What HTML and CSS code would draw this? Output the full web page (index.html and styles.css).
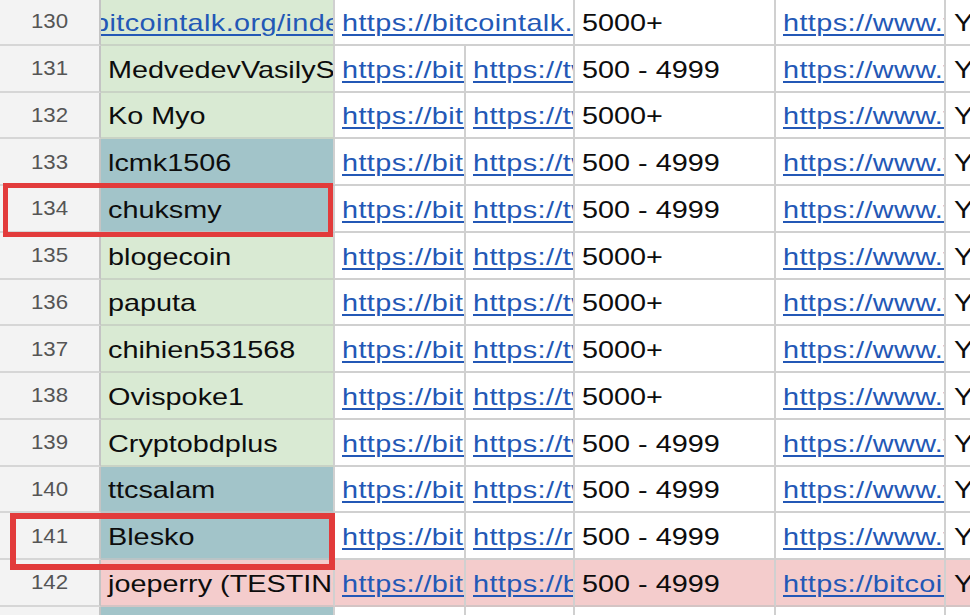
FILE: index.html
```html
<!DOCTYPE html>
<html>
<head>
<meta charset="utf-8">
<link rel="stylesheet" href="styles.css">
</head>
<body>
<div class="sheet">
  <div class="grid">
    <div class="rh"><span class="n">130</span></div>
    <div class="c green"><a class="t shift">bitcointalk.org/index.php?topic=</a></div>
    <div class="c wide"><a class="t">https://bitcointalk.org/index.php</a></div>
    <div class="c"><span class="t">5000+</span></div>
    <div class="c"><a class="t">https://www.twitter.com</a></div>
    <div class="c last"><span class="t">Y</span></div>

    <div class="rh"><span class="n">131</span></div>
    <div class="c green"><span class="t">MedvedevVasilySergeevich</span></div>
    <div class="c"><a class="t">https://bitcointalk.org</a></div>
    <div class="c"><a class="t">https://twitter.com</a></div>
    <div class="c"><span class="t">500 - 4999</span></div>
    <div class="c"><a class="t">https://www.twitter.com</a></div>
    <div class="c last"><span class="t">Y</span></div>

    <div class="rh"><span class="n">132</span></div>
    <div class="c green"><span class="t">Ko Myo</span></div>
    <div class="c"><a class="t">https://bitcointalk.org</a></div>
    <div class="c"><a class="t">https://twitter.com</a></div>
    <div class="c"><span class="t">5000+</span></div>
    <div class="c"><a class="t">https://www.twitter.com</a></div>
    <div class="c last"><span class="t">Y</span></div>

    <div class="rh"><span class="n">133</span></div>
    <div class="c blue"><span class="t">lcmk1506</span></div>
    <div class="c"><a class="t">https://bitcointalk.org</a></div>
    <div class="c"><a class="t">https://twitter.com</a></div>
    <div class="c"><span class="t">500 - 4999</span></div>
    <div class="c"><a class="t">https://www.twitter.com</a></div>
    <div class="c last"><span class="t">Y</span></div>

    <div class="rh"><span class="n">134</span></div>
    <div class="c blue"><span class="t">chuksmy</span></div>
    <div class="c"><a class="t">https://bitcointalk.org</a></div>
    <div class="c"><a class="t">https://twitter.com</a></div>
    <div class="c"><span class="t">500 - 4999</span></div>
    <div class="c"><a class="t">https://www.twitter.com</a></div>
    <div class="c last"><span class="t">Y</span></div>

    <div class="rh"><span class="n">135</span></div>
    <div class="c green"><span class="t">blogecoin</span></div>
    <div class="c"><a class="t">https://bitcointalk.org</a></div>
    <div class="c"><a class="t">https://twitter.com</a></div>
    <div class="c"><span class="t">5000+</span></div>
    <div class="c"><a class="t">https://www.twitter.com</a></div>
    <div class="c last"><span class="t">Y</span></div>

    <div class="rh"><span class="n">136</span></div>
    <div class="c green"><span class="t">paputa</span></div>
    <div class="c"><a class="t">https://bitcointalk.org</a></div>
    <div class="c"><a class="t">https://twitter.com</a></div>
    <div class="c"><span class="t">5000+</span></div>
    <div class="c"><a class="t">https://www.twitter.com</a></div>
    <div class="c last"><span class="t">Y</span></div>

    <div class="rh"><span class="n">137</span></div>
    <div class="c green"><span class="t">chihien531568</span></div>
    <div class="c"><a class="t">https://bitcointalk.org</a></div>
    <div class="c"><a class="t">https://twitter.com</a></div>
    <div class="c"><span class="t">5000+</span></div>
    <div class="c"><a class="t">https://www.twitter.com</a></div>
    <div class="c last"><span class="t">Y</span></div>

    <div class="rh"><span class="n">138</span></div>
    <div class="c green"><span class="t">Ovispoke1</span></div>
    <div class="c"><a class="t">https://bitcointalk.org</a></div>
    <div class="c"><a class="t">https://twitter.com</a></div>
    <div class="c"><span class="t">5000+</span></div>
    <div class="c"><a class="t">https://www.twitter.com</a></div>
    <div class="c last"><span class="t">Y</span></div>

    <div class="rh"><span class="n">139</span></div>
    <div class="c green"><span class="t">Cryptobdplus</span></div>
    <div class="c"><a class="t">https://bitcointalk.org</a></div>
    <div class="c"><a class="t">https://twitter.com</a></div>
    <div class="c"><span class="t">500 - 4999</span></div>
    <div class="c"><a class="t">https://www.twitter.com</a></div>
    <div class="c last"><span class="t">Y</span></div>

    <div class="rh"><span class="n">140</span></div>
    <div class="c blue"><span class="t">ttcsalam</span></div>
    <div class="c"><a class="t">https://bitcointalk.org</a></div>
    <div class="c"><a class="t">https://twitter.com</a></div>
    <div class="c"><span class="t">500 - 4999</span></div>
    <div class="c"><a class="t">https://www.twitter.com</a></div>
    <div class="c last"><span class="t">Y</span></div>

    <div class="rh"><span class="n">141</span></div>
    <div class="c blue"><span class="t">Blesko</span></div>
    <div class="c"><a class="t">https://bitcointalk.org</a></div>
    <div class="c"><a class="t">https://reddit.com</a></div>
    <div class="c"><span class="t">500 - 4999</span></div>
    <div class="c"><a class="t">https://www.twitter.com</a></div>
    <div class="c last"><span class="t">Y</span></div>

    <div class="rh"><span class="n">142</span></div>
    <div class="c pink"><span class="t">joeperry (TESTING)</span></div>
    <div class="c pink"><a class="t">https://bitcointalk.org</a></div>
    <div class="c pink"><a class="t">https://bitcointalk.org</a></div>
    <div class="c pink"><span class="t">500 - 4999</span></div>
    <div class="c pink"><a class="t">https://bitcointalk.org</a></div>
    <div class="c pink last"><span class="t">Y</span></div>

    <div class="rh"><span class="n">143</span></div>
    <div class="c blue"></div>
    <div class="c"></div>
    <div class="c"></div>
    <div class="c"></div>
    <div class="c"></div>
    <div class="c last"></div>
  </div>
  <div class="mark mark-a"></div>
  <div class="mark mark-b"></div>
</div>
</body>
</html>
```
FILE: styles.css
```css
html, body {
  margin: 0;
  padding: 0;
  background: #ffffff;
  overflow: hidden;
}

.sheet {
  position: relative;
  width: 970px;
  height: 615px;
  overflow: hidden;
  font-family: "Liberation Sans", Arial, sans-serif;
}

.grid {
  display: grid;
  grid-template-columns: 101px 234px 131px 109px 201px 170px 24px;
  grid-auto-rows: 46.75px;
  margin-top: -1px;
}

.rh {
  box-sizing: border-box;
  background: #f3f3f3;
  border-right: 2px solid #c4c4c4;
  border-bottom: 2px solid #d6d6d6;
  display: flex;
  align-items: center;
  justify-content: center;
}

.n {
  display: inline-block;
  font-size: 21px;
  color: #555555;
  transform: scaleX(1.06);
}

.c {
  box-sizing: border-box;
  border-right: 2px solid #d0d0d0;
  border-bottom: 2px solid #d0d0d0;
  display: flex;
  align-items: center;
  padding-left: 7px;
  padding-top: 3px;
  overflow: hidden;
  white-space: nowrap;
  background: #ffffff;
}

.c.last {
  padding-left: 8px;
  border-right: none;
}

.c.wide {
  grid-column: span 2;
}

.green { background: #d9ead3; border-bottom-color: #c9d3c5; }
.blue { background: #a2c4c9; border-bottom-color: #b9c4c6; }
.pink { background: #f4cccc; border-bottom-color: #d4c4c4; }

.t {
  display: inline-block;
  font-size: 24px;
  color: #0d0d0d;
  transform: scaleX(1.2);
  transform-origin: left center;
}

a.t {
  color: #2358b6;
  letter-spacing: 0.35px;
  text-decoration: underline;
  text-decoration-thickness: 2px;
  text-underline-offset: 3px;
}

.t.shift {
  margin-left: -15px;
}

.mark {
  position: absolute;
  box-sizing: border-box;
  border: 5px solid #e23b3b;
}

.mark-a {
  left: 3px;
  top: 183px;
  width: 330px;
  height: 54px;
}

.mark-b {
  left: 10px;
  top: 513px;
  width: 325px;
  height: 57px;
  border-width: 6px;
}
```
